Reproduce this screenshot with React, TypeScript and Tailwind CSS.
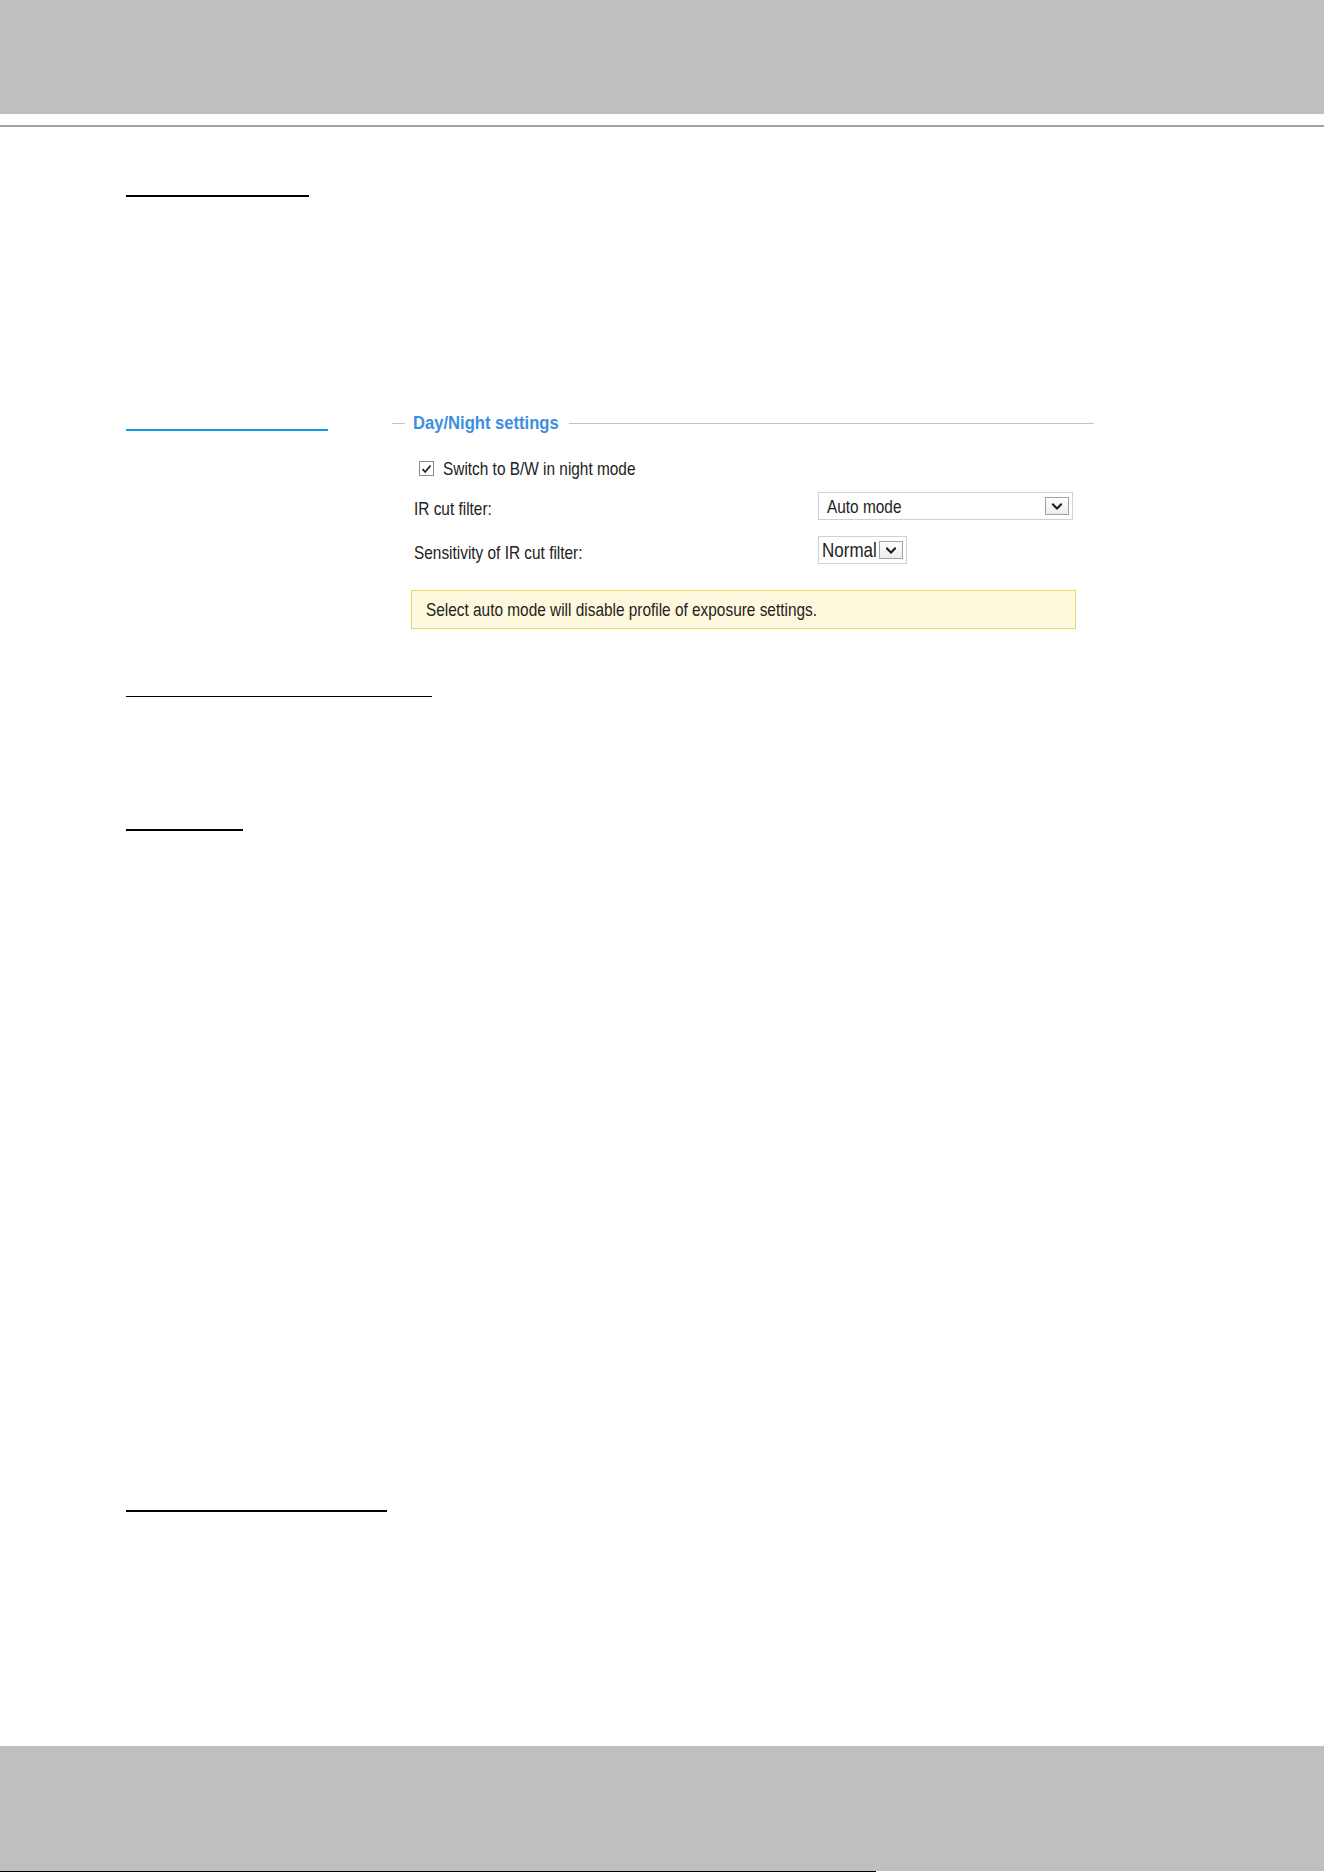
import React from "react";

const font = { fontFamily: '"Liberation Sans", Arial, sans-serif' };

function Chevron() {
  return (
    <svg width="10" height="7" viewBox="0 0 10 7" fill="none">
      <path d="M1 1.5 L5 5.5 L9 1.5" stroke="#1a1a1a" strokeWidth="2" strokeLinecap="square" />
    </svg>
  );
}

function SelectBox({
  value,
  width,
  pad,
  size,
}: {
  value: string;
  width: string;
  pad: string;
  size: string;
}) {
  return (
    <div
      className={`${width} ${pad} h-[28px] border border-[#c9d2e0] bg-white flex items-center justify-between pr-[3px]`}
    >
      <span className={`${size} inline-block scale-y-120 text-[#222] leading-none`}>{value}</span>
      <div className="w-[24px] h-[18px] border border-[#9ea3ab] bg-gradient-to-b from-white to-[#ececec] flex items-center justify-center">
        <Chevron />
      </div>
    </div>
  );
}

export default function App() {
  return (
    <div className="w-[1324px] h-[1872px] bg-white flex flex-col" style={font}>
      {/* page header band */}
      <div className="h-[114px] bg-[#bebfc1]" />
      <div className="mt-[11px] h-[2px] bg-[#a2a2a2]" />

      <main className="flex-1 flex flex-col pl-[126px]">
        <div className="mt-[68px] w-[183px] h-[2px] bg-black" />

        <section className="mt-[216px] flex">
          <div className="w-[266px] pt-[16px]">
            <div className="w-[202px] h-[2px] bg-[#0a9fe6]" />
          </div>

          <div className="w-[702px] flex flex-col">
            {/* legend */}
            <div className="h-[20px] flex items-center">
              <div className="w-[13px] h-px bg-[#c4c4c4]" />
              <span className="ml-[8px] inline-block scale-y-115 text-[16.6px] font-bold text-[#3b8fde] leading-none">
                Day/Night settings
              </span>
              <div className="ml-[10px] flex-1 h-px bg-[#c4c4c4]" />
            </div>

            {/* B/W switch */}
            <div className="mt-[28px] pl-[27px] flex items-center gap-[9px]">
              <div className="w-[15px] h-[15px] border border-[#8a8a8a] bg-white flex items-center justify-center">
                <svg width="11" height="10" viewBox="0 0 11 10" fill="none">
                  <path d="M1.5 5.2 L4.2 8 L9.5 1.5" stroke="#222" strokeWidth="1.8" />
                </svg>
              </div>
              <span className="inline-block scale-y-120 text-[15.4px] text-[#222] leading-none">
                Switch to B/W in night mode
              </span>
            </div>

            {/* IR cut filter */}
            <div className="mt-[16px] pl-[22px] flex items-center">
              <span className="w-[404px] pt-[4px] inline-block scale-y-120 text-[15.4px] text-[#222] leading-none">
                IR cut filter:
              </span>
              <SelectBox value="Auto mode" width="w-[255px]" pad="pl-[8px]" size="text-[15.4px]" />
            </div>

            {/* sensitivity */}
            <div className="mt-[16px] pl-[22px] flex items-center">
              <span className="w-[404px] pt-[4px] inline-block scale-y-120 text-[15.4px] text-[#222] leading-none">
                Sensitivity of IR cut filter:
              </span>
              <SelectBox value="Normal" width="w-[89px]" pad="pl-[3px]" size="text-[17px]" />
            </div>

            {/* notice */}
            <div className="mt-[26px] ml-[19px] w-[665px] h-[39px] border border-[#ecd66a] bg-[#fef9dc] flex items-center pl-[14px]">
              <span className="inline-block scale-y-120 text-[15.4px] text-[#222] leading-none">
                Select auto mode will disable profile of exposure settings.
              </span>
            </div>
          </div>
        </section>

        <div className="mt-[67px] w-[306px] h-px bg-black" />
        <div className="mt-[132px] w-[117px] h-[2px] bg-black" />
        <div className="mt-[679px] w-[261px] h-[2px] bg-black" />
      </main>

      {/* page footer band */}
      <footer className="h-[126px] flex flex-col">
        <div className="flex-1 bg-[#bebfc1]" />
        <div className="h-px flex">
          <div className="w-[876px] bg-black" />
          <div className="flex-1 bg-white" />
        </div>
      </footer>
    </div>
  );
}
